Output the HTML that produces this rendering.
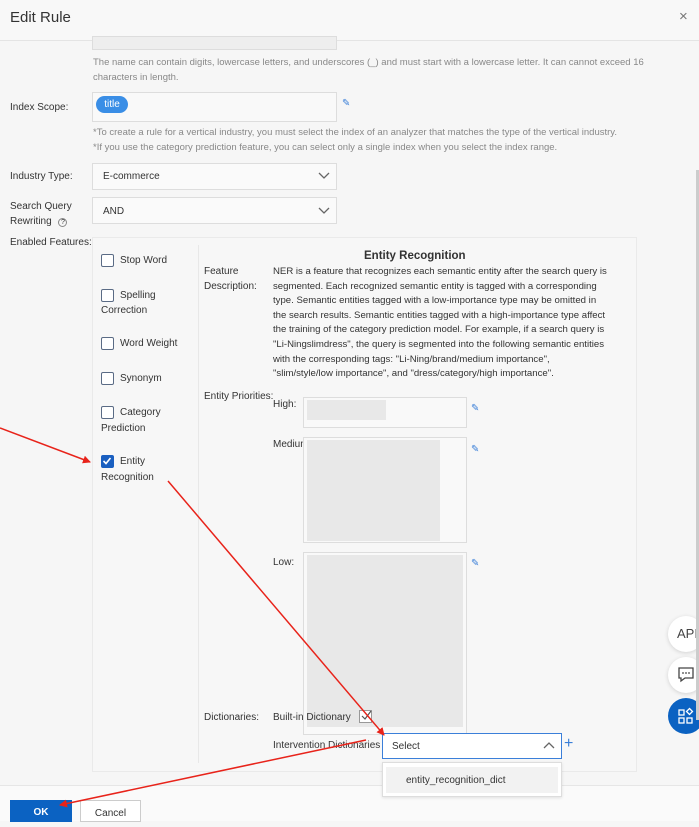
<!DOCTYPE html>
<html><head><meta charset="utf-8"><style>
*{box-sizing:border-box;margin:0;padding:0}
body{width:699px;height:821px;overflow:hidden;background:#f6f6f6;font-family:"Liberation Sans",sans-serif;font-size:10px;color:#333;position:relative}
.a{position:absolute;white-space:nowrap}
.box{position:absolute;border:1px solid #ddd;background:#f9f9f9}
.hint{color:#888;font-size:9.5px}
.cb{position:absolute;width:13px;height:13px;border:1.5px solid #5a6b85;border-radius:2px;background:#fff}
.gray{position:absolute;background:#e8e8e8}
.pen{position:absolute;color:#3a7fd8;font-size:10px}
</style></head><body>
<div class="a" style="left:0;top:0;width:699px;height:41px;background:#f8f8f8;border-bottom:1px solid #e4e4e4"></div>
<div class="a" style="left:10px;top:9px;font-size:15px;color:#333">Edit Rule</div>
<div class="a" style="left:679px;top:8px;font-size:15px;color:#777">×</div>

<div class="box" style="left:92px;top:36px;width:245px;height:14px;background:#eee"></div>
<div class="a hint" style="left:93px;top:56px;line-height:14.5px;white-space:normal;width:560px">The name can contain digits, lowercase letters, and underscores (_) and must start with a lowercase letter. It can cannot exceed 16 characters in length.</div>

<div class="a" style="left:10px;top:102px">Index Scope:</div>
<div class="box" style="left:92px;top:92px;width:245px;height:30px"></div>
<div class="a" style="left:96px;top:96px;width:32px;height:17px;border-radius:9px;background:#3a8ee6;color:#fff;text-align:center;line-height:17px">title</div>
<div class="pen" style="left:342px;top:98px">✎</div>
<div class="a hint" style="left:93px;top:127px">*To create a rule for a vertical industry, you must select the index of an analyzer that matches the type of the vertical industry.</div>
<div class="a hint" style="left:93px;top:142px">*If you use the category prediction feature, you can select only a single index when you select the index range.</div>

<div class="a" style="left:10px;top:171px">Industry Type:</div>
<div class="box" style="left:92px;top:163px;width:245px;height:27px;background:#fafafa"></div>
<div class="a" style="left:103px;top:171px">E-commerce</div>
<svg class="a" style="left:318px;top:172px" width="12" height="8"><path d="M1 1l5 5 5-5" fill="none" stroke="#666" stroke-width="1.3"/></svg>

<div class="a" style="left:10px;top:199px;line-height:15px">Search Query<br>Rewriting <span style="display:inline-block;width:9px;height:9px;border:1px solid #888;border-radius:50%;font-size:7px;text-align:center;line-height:8px;margin-left:4px">?</span></div>
<div class="box" style="left:92px;top:197px;width:245px;height:27px;background:#fafafa"></div>
<div class="a" style="left:103px;top:206px">AND</div>
<svg class="a" style="left:318px;top:207px" width="12" height="8"><path d="M1 1l5 5 5-5" fill="none" stroke="#666" stroke-width="1.3"/></svg>

<div class="a" style="left:10px;top:237px">Enabled Features:</div>
<div class="box" style="left:92px;top:237px;width:545px;height:535px;border-color:#eaeaea;background:#f7f7f7"></div>
<div class="a" style="left:198px;top:245px;width:1px;height:518px;background:#e8e8e8"></div>

<div class="cb" style="left:101px;top:254px"></div><div class="a" style="left:120px;top:255px">Stop Word</div>
<div class="cb" style="left:101px;top:289px"></div><div class="a" style="left:120px;top:290px">Spelling</div><div class="a" style="left:101px;top:305px">Correction</div>
<div class="cb" style="left:101px;top:337px"></div><div class="a" style="left:120px;top:338px">Word Weight</div>
<div class="cb" style="left:101px;top:372px"></div><div class="a" style="left:120px;top:373px">Synonym</div>
<div class="cb" style="left:101px;top:406px"></div><div class="a" style="left:120px;top:407px">Category</div><div class="a" style="left:101px;top:423px">Prediction</div>
<div class="cb" style="left:101px;top:455px;background:#1a5fc0;border-color:#1a5fc0"><svg width="10" height="10" style="position:absolute;left:0;top:0"><path d="M1.5 5l2.5 2.5 4.5-5.5" fill="none" stroke="#fff" stroke-width="1.6"/></svg></div>
<div class="a" style="left:120px;top:456px">Entity</div><div class="a" style="left:101px;top:472px">Recognition</div>

<div class="a" style="left:364px;top:250px;font-size:11.5px;font-weight:bold">Entity Recognition</div>
<div class="a" style="left:204px;top:265px;line-height:14.5px">Feature<br>Description:</div>
<div class="a" style="left:273px;top:265px;line-height:14.6px;font-size:9.6px">NER is a feature that recognizes each semantic entity after the search query is<br>segmented. Each recognized semantic entity is tagged with a corresponding<br>type. Semantic entities tagged with a low-importance type may be omitted in<br>the search results. Semantic entities tagged with a high-importance type affect<br>the training of the category prediction model. For example, if a search query is<br>"Li-Ningslimdress", the query is segmented into the following semantic entities<br>with the corresponding tags: "Li-Ning/brand/medium importance",<br>"slim/style/low importance", and "dress/category/high importance".</div>

<div class="a" style="left:204px;top:391px">Entity Priorities:</div>
<div class="a" style="left:273px;top:399px">High:</div>
<div class="box" style="left:303px;top:397px;width:164px;height:31px"></div>
<div class="gray" style="left:307px;top:400px;width:79px;height:20px"></div>
<div class="pen" style="left:471px;top:403px">✎</div>
<div class="a" style="left:273px;top:439px">Medium</div>
<div class="box" style="left:303px;top:437px;width:164px;height:106px"></div>
<div class="gray" style="left:307px;top:440px;width:133px;height:101px"></div>
<div class="pen" style="left:471px;top:444px">✎</div>
<div class="a" style="left:273px;top:557px">Low:</div>
<div class="box" style="left:303px;top:552px;width:164px;height:183px"></div>
<div class="gray" style="left:307px;top:555px;width:156px;height:172px"></div>
<div class="pen" style="left:471px;top:558px">✎</div>

<div class="a" style="left:204px;top:712px">Dictionaries:</div>
<div class="a" style="left:273px;top:712px">Built-in Dictionary</div>
<div class="a" style="left:359px;top:710px;width:13px;height:13px;border:1px solid #999;background:#fff"><svg width="12" height="12" style="position:absolute;left:0;top:-1px"><path d="M2 6l3 3 6-8" fill="none" stroke="#555" stroke-width="1.2"/></svg></div>
<div class="a" style="left:273px;top:740px">Intervention Dictionaries</div>
<div class="a" style="left:382px;top:733px;width:180px;height:26px;border:1px solid #3b7fd9;background:#fff"></div>
<div class="a" style="left:392px;top:741px">Select</div>
<svg class="a" style="left:543px;top:741px" width="12" height="8"><path d="M1 7l5-5 5 5" fill="none" stroke="#666" stroke-width="1.3"/></svg>
<div class="a" style="left:564px;top:735px;color:#3a7fd8;font-size:16px">+</div>

<div class="a" style="left:0;top:785px;width:699px;height:36px;background:#fafafa;border-top:1px solid #e6e6e6"></div>
<div class="a" style="left:382px;top:762px;width:180px;height:35px;border:1px solid #ddd;background:#fff;box-shadow:0 1px 3px rgba(0,0,0,.1)"></div>
<div class="a" style="left:386px;top:767px;width:172px;height:26px;background:#f2f2f2"></div>
<div class="a" style="left:406px;top:775px">entity_recognition_dict</div>
<div class="a" style="left:10px;top:800px;width:62px;height:22px;background:#0b62c2;color:#fff;font-weight:bold;text-align:center;line-height:26px">OK</div>
<div class="a" style="left:80px;top:800px;width:61px;height:22px;border:1px solid #ccc;background:#fff;text-align:center;line-height:26px">Cancel</div>

<div class="a" style="left:668px;top:616px;width:36px;height:36px;border-radius:50%;background:#fff;box-shadow:0 1px 4px rgba(0,0,0,.15);font-size:13px;line-height:36px;padding-left:9px;color:#444">API</div>
<div class="a" style="left:668px;top:657px;width:36px;height:36px;border-radius:50%;background:#fff;box-shadow:0 1px 4px rgba(0,0,0,.15)"><svg width="36" height="36"><path d="M11 11h14v10h-8l-4 3v-3h-2z" fill="none" stroke="#444" stroke-width="1.3"/><circle cx="15" cy="16" r=".9" fill="#444"/><circle cx="18" cy="16" r=".9" fill="#444"/><circle cx="21" cy="16" r=".9" fill="#444"/></svg></div>
<div class="a" style="left:668px;top:698px;width:36px;height:36px;border-radius:50%;background:#0b62c2"><svg width="36" height="36"><g fill="none" stroke="#fff" stroke-width="1.3"><rect x="11" y="12" width="5" height="5"/><rect x="11" y="20" width="5" height="5"/><rect x="19" y="20" width="5" height="5"/><path d="M21.5 10.5l3 3-3 3-3-3z"/></g></svg></div>
<div class="a" style="left:696px;top:170px;width:3px;height:550px;background:#ccc"></div>

<svg class="a" style="left:0;top:0" width="699" height="821">
<defs><marker id="ar" markerWidth="8" markerHeight="8" refX="7" refY="4" orient="auto" markerUnits="userSpaceOnUse" viewBox="0 0 8 8"><path d="M0 0L8 4L0 8z" fill="#e8231a"/></marker></defs>
<g stroke="#e8231a" stroke-width="1.5" fill="none">
<path d="M0 428L90 462" marker-end="url(#ar)"/>
<path d="M168 481L384 735" marker-end="url(#ar)"/>
<path d="M366 740L60 805" marker-end="url(#ar)"/>
</g></svg>
</body></html>
